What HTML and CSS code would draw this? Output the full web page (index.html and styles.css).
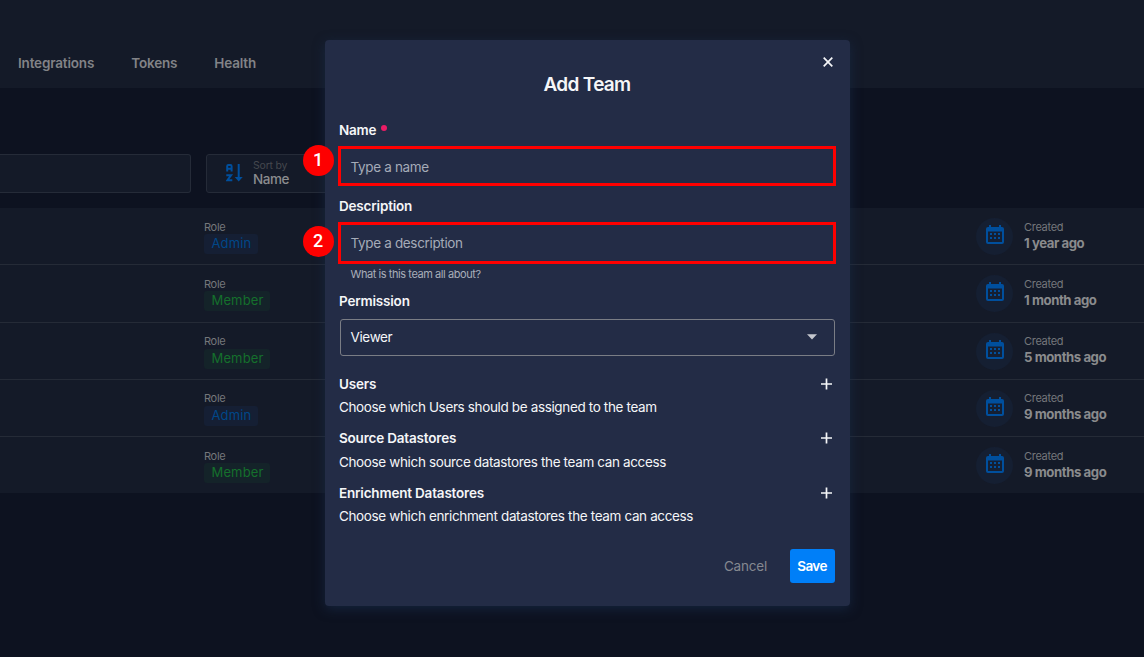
FILE: index.html
```
<!DOCTYPE html>
<html lang="en">
<head>
<meta charset="utf-8">
<title>Add Team</title>
<link rel="stylesheet" href="styles.css">
</head>
<body>
<svg class="defs" width="0" height="0">
  <symbol id="calendar" viewBox="0 0 18 19">
    <path fill-rule="evenodd" d="M3 0h2v2h8V0h2v2h1a2 2 0 0 1 2 2v13a2 2 0 0 1-2 2H2a2 2 0 0 1-2-2V4a2 2 0 0 1 2-2h1zM2 6.500v10.500h14V6.500zM4 8h2v2H4zm4 0h2v2H8zm4 0h2v2h-2zM4 12h2v2H4zm4 0h2v2H8zm4 0h2v2h-2z"/>
  </symbol>
  <symbol id="plus" viewBox="0 0 12 12"><path d="M6.500 .5v11M1 6h11" fill="none" stroke="currentColor" stroke-width="1.7"/></symbol>
</svg>
<header class="topbar">
  <nav class="tabs"><a>Integrations</a><a>Tokens</a><a>Health</a></nav>
</header>
<main>
  <div class="toolbar">
    <div class="search"></div>
    <div class="sort">
      <svg class="sort-icon" width="17" height="18" viewBox="0 0 17 18"><path d="M1.200 7.500V2.200q0-1.200 1.200-1.200h2q1.200 0 1.200 1.200v5.300M1.200 4.800h4.400M.3 11.200h4.800L1.400 16.200h4.900" fill="none" stroke="currentColor" stroke-width="2"/><path d="M11.700 0h2v13h3L12.700 17.500 8.700 13h3z" fill="currentColor"/></svg>
      <div class="sort-text"><span class="sort-label">Sort by</span><span class="sort-value">Name</span></div>
    </div>
  </div>
  <section class="rows">
    <div class="row"><div class="role"><span class="cap">Role</span><span class="chip admin">Admin</span></div><div class="created"><span class="disc"><svg width="18" height="19"><use href="#calendar"/></svg></span><div class="date"><span class="cap">Created</span><b>1 year ago</b></div></div></div>
    <div class="row"><div class="role"><span class="cap">Role</span><span class="chip member">Member</span></div><div class="created"><span class="disc"><svg width="18" height="19"><use href="#calendar"/></svg></span><div class="date"><span class="cap">Created</span><b>1 month ago</b></div></div></div>
    <div class="row raised"><div class="role"><span class="cap">Role</span><span class="chip member">Member</span></div><div class="created"><span class="disc"><svg width="18" height="19"><use href="#calendar"/></svg></span><div class="date"><span class="cap">Created</span><b>5 months ago</b></div></div></div>
    <div class="row raised"><div class="role"><span class="cap">Role</span><span class="chip admin">Admin</span></div><div class="created"><span class="disc"><svg width="18" height="19"><use href="#calendar"/></svg></span><div class="date"><span class="cap">Created</span><b>9 months ago</b></div></div></div>
    <div class="row"><div class="role"><span class="cap">Role</span><span class="chip member">Member</span></div><div class="created"><span class="disc"><svg width="18" height="19"><use href="#calendar"/></svg></span><div class="date"><span class="cap">Created</span><b>9 months ago</b></div></div></div>
  </section>
</main>
<div class="overlay">
  <form class="modal">
    <svg class="close" width="10" height="10" viewBox="0 0 10 10"><path d="M.7.7l8.600 8.600M9.300.7L.7 9.300" stroke="currentColor" stroke-width="1.7"/></svg>
    <h1>Add Team</h1>
    <div class="label">Name<i class="required"></i></div>
    <div class="field name"><span>Type a name</span><b class="step">1</b></div>
    <div class="label">Description</div>
    <div class="field desc"><span>Type a description</span><b class="step">2</b></div>
    <div class="helper">What is this team all about?</div>
    <div class="label">Permission</div>
    <div class="select"><span>Viewer</span><svg width="10" height="6" viewBox="0 0 10 6"><path d="M0 .3h10L5 5.500z" fill="currentColor"/></svg></div>
    <div class="group users"><div class="label">Users<svg width="12" height="12"><use href="#plus"/></svg></div><p>Choose which Users should be assigned to the team</p></div>
    <div class="group source"><div class="label">Source Datastores<svg width="12" height="12"><use href="#plus"/></svg></div><p>Choose which source datastores the team can access</p></div>
    <div class="group enrich"><div class="label">Enrichment Datastores<svg width="12" height="12"><use href="#plus"/></svg></div><p>Choose which enrichment datastores the team can access</p></div>
    <div class="actions"><span class="cancel">Cancel</span><span class="save">Save</span></div>
  </form>
</div>
</body>
</html>
```
FILE: styles.css
```
* { box-sizing: border-box; }
body { margin: 0; height: 657px; overflow: hidden; background: #0d1220; font-family: Inter, sans-serif; font-size: 13.5px; color: #828387; letter-spacing: -0.36px; }
.defs { position: absolute; }
.topbar { height: 88px; background: #141a28; padding: 53px 0 0 18px; }
.tabs { display: flex; gap: 37px; line-height: 20px; font-weight: 600; letter-spacing: -.17px; }
.toolbar { height: 120px; padding-top: 66px; display: flex; gap: 15px; }
.search { width: 191px; height: 39px; background: #141a28; border: 1px solid #252b38; border-left: 0; border-radius: 0 3px 3px 0; }
.sort { width: 160px; height: 39px; background: #141a28; border: 1px solid #252b38; border-radius: 3px; display: flex; padding: 4px 0 0 19px; gap: 10px; color: #004f9d; }
.sort-icon { margin-top: 5px; }
.sort-text { display: flex; flex-direction: column; }
.sort-label { font-size: 10.5px; line-height: 14px; color: #45484e; letter-spacing: -.2px; }
.sort-value { font-size: 13.5px; line-height: 13px; color: #8b8c8f; font-weight: 500; letter-spacing: -.45px; }
.rows { display: grid; grid-template-rows: 57px 58px 57px 57px 56px; background: #141a28; }
.row { display: flex; padding-left: 204px; border-bottom: 1px solid #252b37; }
.row:last-child { border-bottom: 0; }
.role { width: 772px; padding-top: 12px; display: flex; flex-direction: column; align-items: flex-start; }
.cap { font-size: 11px; line-height: 14px; color: #75777b; letter-spacing: -.3px; }
.chip { height: 20px; line-height: 19px; border-radius: 3px; padding: 0 7.5px; font-size: 13px; letter-spacing: .15px; }
.admin { color: #004789; background: #151f34; width: 54px; }
.member { color: #15702c; background: #142329; width: 66px; }
.created { display: flex; gap: 11px; padding-top: 10px; }
.raised .role { padding-top: 11px; }
.raised .chip { margin-top: 1px; }
.disc { width: 37px; height: 37px; border-radius: 50%; background: #151f32; display: flex; align-items: center; justify-content: center; fill: #004f9d; padding-bottom: 4px; }
.date { display: flex; flex-direction: column; padding-top: 2px; }
.raised .date { padding-top: 1px; }
.date b { font-size: 13.2px; line-height: 18px; font-weight: 700; color: #8a8b8d; letter-spacing: -.45px; }
.overlay { position: absolute; inset: 0; padding: 40px 294px 51px 325px; }
.modal { position: relative; height: 566px; padding: 30px 15px 23px 14px; border-radius: 4px; background: #232c46; color: #f5f6f8; box-shadow: 0 3px 12px rgba(24,44,76,.65); }
.close { position: absolute; left: 498px; top: 17px; }
h1 { margin: 0; height: 50px; line-height: 30px; font-size: 19px; font-weight: 600; text-align: center; letter-spacing: -.7px; }
.label { display: flex; height: 20px; line-height: 20px; font-weight: 600; letter-spacing: -.19px; }
.required { width: 6px; height: 6px; border-radius: 50%; background: #eb1c66; margin: 5px 0 0 5px; }
.field { position: relative; margin: 6px -1px 10px; border: 3px solid #fe0000; padding-left: 9.5px; color: #a5abb8; letter-spacing: -.34px; }
.name { height: 40px; line-height: 36px; }
.desc { height: 42px; line-height: 36px; margin-bottom: 2px; }
.step { position: absolute; left: -38px; top: -4px; width: 31px; height: 31px; border-radius: 50%; background: #fe0000; color: #fff; font: 500 18px/29px Roboto, sans-serif; text-align: center; text-indent: -1px; letter-spacing: 0; }
.desc .step { top: 1px; }
.helper { height: 25px; line-height: 17px; padding-left: 11.5px; font-size: 11px; letter-spacing: -.43px; color: #a9aeb9; }
.select { height: 37px; margin: 8px 0 18px 1px; border: 1px solid #7a7d85; border-radius: 3px; padding: 0 17px 1px 9.5px; display: flex; align-items: center; justify-content: space-between; }
.select svg { color: #c4c7ce; }
.group { height: 54px; }
.source { height: 55px; }
.group .label { justify-content: space-between; padding-right: 3px; align-items: center; }
.group p { margin: 3px 0 0; line-height: 20px; }
.source p { margin-top: 4px; }
.enrich { height: 66px; }
.actions { display: flex; justify-content: flex-end; gap: 23px; line-height: 34px; }
.cancel { color: #858890; letter-spacing: -.2px; }
.save { width: 45px; height: 34px; border-radius: 3px; background: #007ff8; text-align: center; color: #fff; font-weight: 600; letter-spacing: -.6px; text-indent: -1px; }
```
